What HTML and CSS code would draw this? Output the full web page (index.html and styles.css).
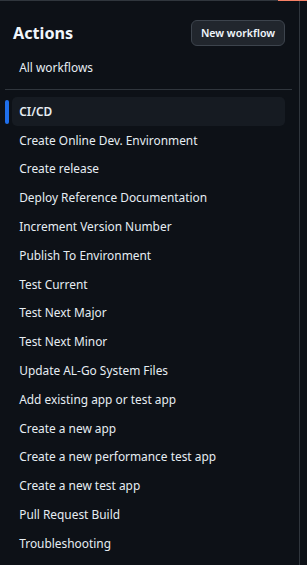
FILE: index.html
```html
<!DOCTYPE html>
<html lang="en">

<head>
    <meta charset="UTF-8">
    <title>Actions</title>
    <meta name="viewport" content="width=device-width, initial-scale=1">
    <link rel="stylesheet" href="styles.css">
</head>

<body>

    <div class="topline">
        <div class="topline-gray"></div>
        <div class="topline-accent"></div>
    </div>

    <div class="layout">
        <nav class="sidebar">
            <div class="sidebar-header">
                <h2>Actions</h2>
                <button class="btn">New workflow</button>
            </div>

            <a class="nav-item all" href="#">All workflows</a>

            <div class="divider"></div>

            <ul class="workflow-list">
                <li><a class="nav-item selected" href="#">CI/CD</a></li>
                <li><a class="nav-item" href="#">Create Online Dev. Environment</a></li>
                <li><a class="nav-item" href="#">Create release</a></li>
                <li><a class="nav-item" href="#">Deploy Reference Documentation</a></li>
                <li><a class="nav-item" href="#">Increment Version Number</a></li>
                <li><a class="nav-item" href="#">Publish To Environment</a></li>
                <li><a class="nav-item" href="#">Test Current</a></li>
                <li><a class="nav-item" href="#">Test Next Major</a></li>
                <li><a class="nav-item" href="#">Test Next Minor</a></li>
                <li><a class="nav-item" href="#">Update AL-Go System Files</a></li>
                <li><a class="nav-item" href="#">Add existing app or test app</a></li>
                <li><a class="nav-item" href="#">Create a new app</a></li>
                <li><a class="nav-item" href="#">Create a new performance test app</a></li>
                <li><a class="nav-item" href="#">Create a new test app</a></li>
                <li><a class="nav-item" href="#">Pull Request Build</a></li>
                <li><a class="nav-item" href="#">Troubleshooting</a></li>
            </ul>
        </nav>
    </div>

</body>

</html>
```

FILE: styles.css
```css
* {
    box-sizing: border-box;
}

body {
    margin: 0;
    padding: 0;
    height: 100vh;
    background: #0d1117;
    font-family: "Noto Sans", "Liberation Sans", sans-serif;
    color: #e6edf3;
    overflow: hidden;
}

.topline {
    display: flex;
    height: 1px;
}

.topline-gray {
    flex: 1;
    background: #30363d;
}

.topline-accent {
    width: 29px;
    background: #f78166;
}

.layout {
    display: flex;
    height: calc(100vh - 1px);
}

.sidebar {
    width: 300px;
    border-right: 1px solid #30363d;
}

.sidebar-header {
    display: flex;
    justify-content: space-between;
    align-items: center;
    padding: 19px 14px 0 13px;
}

.sidebar-header h2 {
    margin: 0;
    font-size: 16.2px;
    font-weight: 700;
    color: #f0f6fc;
}

.btn {
    height: 26px;
    width: 94px;
    padding: 0;
    border: 1px solid #3d444d;
    border-radius: 6px;
    background: #21262d;
    color: #f0f6fc;
    font-family: inherit;
    font-size: 10.6px;
    font-weight: 600;
    cursor: pointer;
}

.nav-item {
    display: flex;
    align-items: center;
    height: 28.8px;
    padding: 0 7.2px 2px;
    margin: 0 14px 0 12px;
    border-radius: 5px;
    color: #e6edf3;
    font-size: 11.9px;
    text-decoration: none;
    position: relative;
}

.nav-item.all {
    margin-top: 7.6px;
}

.divider {
    height: 1px;
    margin: 7px 7px 0 5px;
    background: #30363d;
}

.workflow-list {
    list-style: none;
    margin: 0;
    padding: 7px 0 0;
}

.nav-item.selected {
    background: #161b22;
    font-weight: 600;
}

.nav-item.selected::before {
    content: "";
    position: absolute;
    left: -7px;
    top: 2.4px;
    width: 4px;
    height: 24px;
    border-radius: 6px;
    background: #1f6feb;
}
```
